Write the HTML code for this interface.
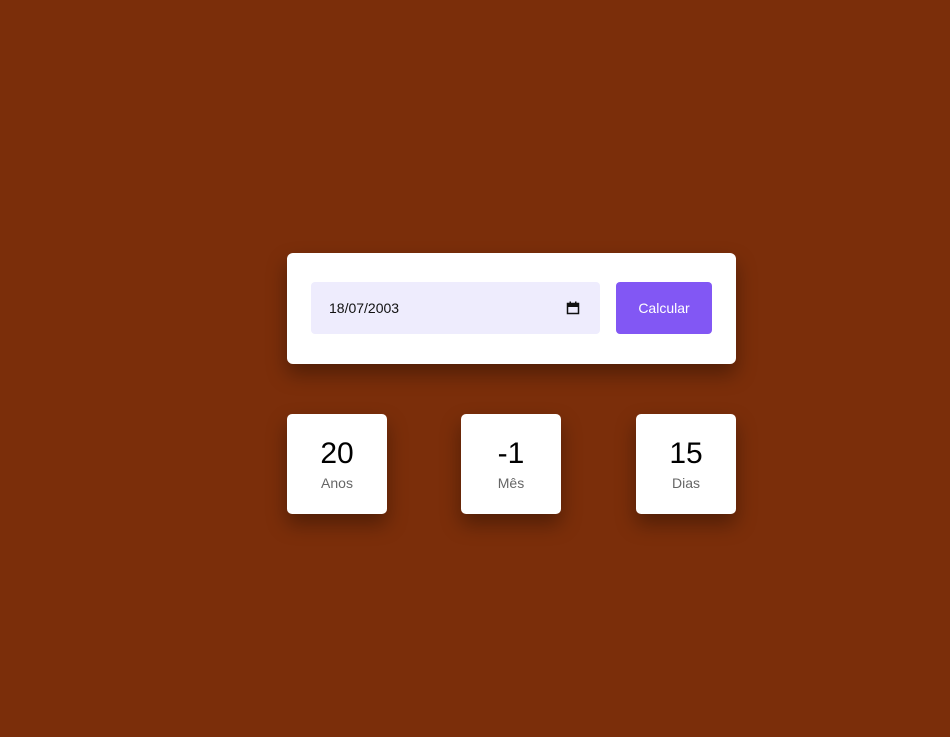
<!DOCTYPE html>
<html><head><meta charset="utf-8"><style>
*{box-sizing:border-box;margin:0;padding:0}
body{width:950px;height:737px;background:#7b2e0a;font-family:"Liberation Sans",Arial,sans-serif;position:relative;overflow:hidden}
.card{position:absolute;left:287px;top:253px;width:449px;height:111px;background:#fff;border-radius:6px;box-shadow:0 10px 20px rgba(0,0,0,.35)}
.inp{position:absolute;left:24px;top:29px;width:289px;height:52px;background:#eeecfd;border-radius:4px;font-size:14px;color:#111;padding-left:18px;line-height:52px}
.cal{position:absolute;right:20px;top:19px}
.btn{position:absolute;left:329px;top:29px;width:96px;height:52px;background:#8257f4;border-radius:4px;color:#fff;font-size:14px;text-align:center;line-height:52px}
.box{position:absolute;top:414px;width:100px;height:100px;background:#fff;border-radius:5px;box-shadow:0 10px 20px rgba(0,0,0,.35);text-align:center}
.box .n{font-size:30px;color:#000;margin-top:22px;line-height:36px}
.box .l{font-size:14px;color:#666;margin-top:3px}
</style></head><body>
<div class="card">
<div class="inp">18/07/2003
<svg class="cal" width="14" height="14" viewBox="0 0 14 14"><rect x="1.5" y="2.5" width="11" height="10" fill="none" stroke="#111" stroke-width="1.5"/><rect x="1.5" y="2.5" width="11" height="3.5" fill="#111"/><rect x="3.5" y="0.5" width="1.5" height="3" fill="#111"/><rect x="9" y="0.5" width="1.5" height="3" fill="#111"/></svg>
</div>
<div class="btn">Calcular</div>
</div>
<div class="box" style="left:287px"><div class="n">20</div><div class="l">Anos</div></div>
<div class="box" style="left:461px"><div class="n">-1</div><div class="l">Mês</div></div>
<div class="box" style="left:636px"><div class="n">15</div><div class="l">Dias</div></div>
</body></html>
